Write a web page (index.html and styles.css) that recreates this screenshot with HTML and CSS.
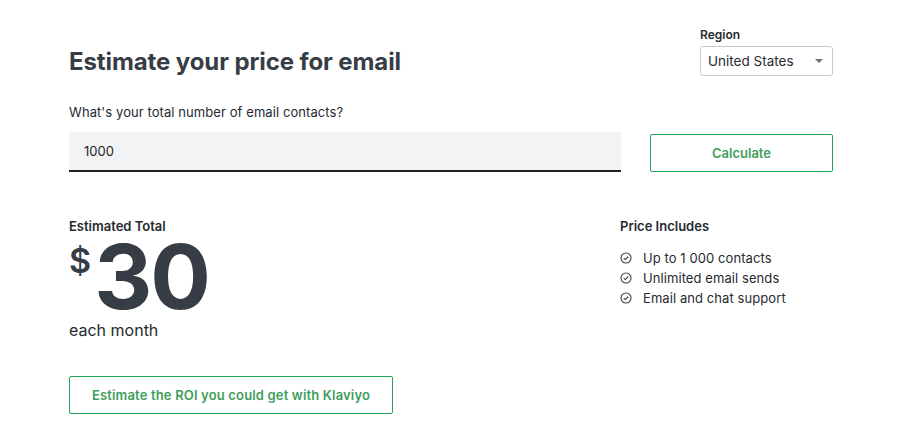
FILE: index.html
```html
<!DOCTYPE html>
<html>
<head>
<meta charset="utf-8">
<link rel="stylesheet" href="styles.css">
</head>
<body>
<div class="page">
  <div class="top">
    <h1 class="title">Estimate your price for email</h1>
    <div class="region">
      <div class="region-label">Region</div>
      <div class="select">
        <span>United States</span>
        <span class="caret"></span>
      </div>
    </div>
  </div>
  <div class="question">What's your total number of email contacts?</div>
  <div class="input-row">
    <div class="input">1000</div>
    <button class="btn calc">Calculate</button>
  </div>
  <div class="result">
    <div class="total">
      <div class="total-label">Estimated Total</div>
      <div class="price"><span class="dollar">$</span><span class="amount">30</span></div>
      <div class="month">each month</div>
    </div>
    <div class="includes">
      <div class="inc-title">Price Includes</div>
      <ul class="inc-list">
        <li><svg class="check" viewBox="0 0 12 12" width="12" height="12"><circle cx="6" cy="6" r="5" fill="none" stroke="#3a3f45" stroke-width="1.1"/><path d="M3.7 6.1 L5.3 7.6 L8.3 4.5" fill="none" stroke="#3a3f45" stroke-width="1.1"/></svg>Up to 1 000 contacts</li>
        <li><svg class="check" viewBox="0 0 12 12" width="12" height="12"><circle cx="6" cy="6" r="5" fill="none" stroke="#3a3f45" stroke-width="1.1"/><path d="M3.7 6.1 L5.3 7.6 L8.3 4.5" fill="none" stroke="#3a3f45" stroke-width="1.1"/></svg>Unlimited email sends</li>
        <li><svg class="check" viewBox="0 0 12 12" width="12" height="12"><circle cx="6" cy="6" r="5" fill="none" stroke="#3a3f45" stroke-width="1.1"/><path d="M3.7 6.1 L5.3 7.6 L8.3 4.5" fill="none" stroke="#3a3f45" stroke-width="1.1"/></svg>Email and chat support</li>
      </ul>
    </div>
  </div>
  <button class="btn roi">Estimate the ROI you could get with Klaviyo</button>
</div>
</body>
</html>
```
FILE: styles.css
```css
* { box-sizing: border-box; }
html, body { margin: 0; padding: 0; background: #fff; }
body { font-family: Inter, "Noto Sans", sans-serif; color: #262a2f; }
.page { width: 908px; padding: 28px 75px 0 69px; }
.top { display: flex; justify-content: space-between; align-items: flex-start; }
.title { margin: 19px 0 0; font-size: 24px; font-weight: 700; color: #373d45; line-height: 30px; letter-spacing: -0.1px; }
.region { width: 133px; }
.region-label { font-size: 12px; font-weight: 600; line-height: 14px; color: #262a2f; margin-bottom: 4px; }
.select { height: 30px; border: 1px solid #c7c9cc; border-radius: 3px; display: flex; align-items: center; justify-content: space-between; padding: 0 9px 0 7px; font-size: 13.5px; color: #262a2f; }
.caret { width: 0; height: 0; border-left: 4px solid transparent; border-right: 4px solid transparent; border-top: 4px solid #6b6f74; }
.question { margin-top: 27px; font-size: 13px; line-height: 16px; color: #262a2f; letter-spacing: 0.08px; }
.input-row { display: flex; align-items: flex-start; gap: 29px; margin-top: 12px; }
.input { width: 552px; height: 40px; background: #f2f3f5; border-bottom: 2px solid #1d1f22; padding: 0 15px; font-size: 13px; line-height: 38px; color: #1d1f22; }
.btn { font-family: Inter, "Noto Sans", sans-serif; background: #fff; border: 1px solid #23a455; border-radius: 2px; color: #3f9e5c; font-weight: 600; font-size: 13px; cursor: pointer; }
.calc { width: 183px; height: 38px; margin-top: 2px; }
.result { display: flex; justify-content: space-between; margin-top: 46px; }
.total-label { font-size: 13px; font-weight: 600; line-height: 16px; color: #262a2f; }
.price { display: flex; align-items: flex-start; margin-top: 4px; height: 76px; }
.dollar { font-size: 34px; font-weight: 600; color: #373d45; line-height: 34px; margin-top: 6px; margin-right: 3px; }
.amount { font-size: 90px; font-weight: 700; color: #373d45; line-height: 78px; letter-spacing: -2px; }
.month { margin-top: 6px; font-size: 16px; color: #262a2f; line-height: 20px; }
.includes { width: 213px; }
.inc-title { font-size: 13px; font-weight: 600; line-height: 16px; color: #262a2f; }
.inc-list { list-style: none; margin: 14px 0 0; padding: 0; }
.inc-list li { display: flex; align-items: center; font-size: 13px; line-height: 20px; color: #262a2f; letter-spacing: 0.08px; }
.check { margin-right: 11px; flex: none; }
.roi { display: block; margin-top: 36px; width: 324px; height: 38px; letter-spacing: 0.16px; }
```
